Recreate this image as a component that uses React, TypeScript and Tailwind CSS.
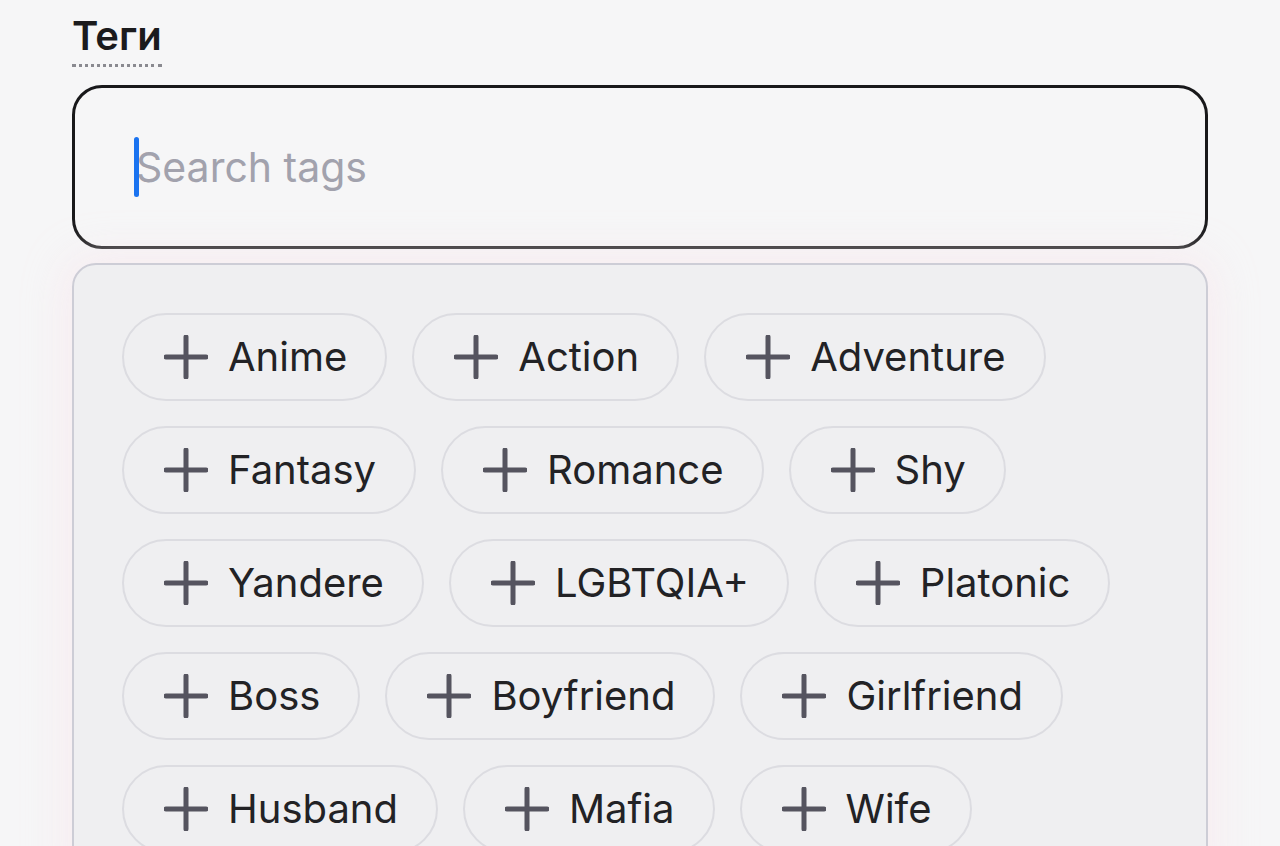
import React from "react";

const rows = [
  ["Anime", "Action", "Adventure"],
  ["Fantasy", "Romance", "Shy"],
  ["Yandere", "LGBTQIA+", "Platonic"],
  ["Boss", "Boyfriend", "Girlfriend"],
  ["Husband", "Mafia", "Wife"],
];

function PlusIcon() {
  return (
    <svg width="44" height="44" viewBox="0 0 44 44" className="shrink-0">
      <line x1="22" y1="2" x2="22" y2="42" stroke="#55545f" strokeWidth="5" strokeLinecap="round" />
      <line x1="2" y1="22" x2="42" y2="22" stroke="#55545f" strokeWidth="5" strokeLinecap="round" />
    </svg>
  );
}

function Chip({ label }: { label: string }) {
  return (
    <div className="flex h-[88px] items-center gap-[20px] rounded-full border-2 border-[#dcdce1] pl-[40px] pr-[38px]">
      <PlusIcon />
      <span className="text-[40px] leading-none text-[#222225]">{label}</span>
    </div>
  );
}

export default function App() {
  return (
    <div className="h-[846px] w-[1280px] overflow-hidden bg-[#f6f6f7] font-['Inter',sans-serif]">
      <div className="px-[72px] pt-[16px]">
        {/* label */}
        <div className="h-[69px]">
          <span className="inline-block border-b-[3px] border-dotted border-[#8a8a90] pb-[8px] text-[40px] font-semibold leading-none text-[#1b1b1d]">
            Теги
          </span>
        </div>

        {/* search */}
        <div className="flex h-[164px] items-center rounded-[30px] border-[3px] border-[#18181a] bg-[#f6f6f7] pl-[61px]">
          <div className="relative">
            <span className="absolute left-[-2px] top-[-10px] h-[60px] w-[5px] rounded-full bg-[#1a73f0]" />
            <span className="text-[41px] leading-none text-[#a2a2ad]">Search tags</span>
          </div>
        </div>

        {/* tags panel */}
        <div className="mt-[14px] rounded-[24px] border-2 border-[#cdcdd6] bg-[#efeff1] px-[48px] pt-[48px] pb-[40px] shadow-[0_0_40px_8px_rgba(248,232,238,0.7)]">
          <div className="flex flex-col gap-[25px]">
            {rows.map((row, i) => (
              <div key={i} className="flex gap-[25px]">
                {row.map((t) => (
                  <Chip key={t} label={t} />
                ))}
              </div>
            ))}
          </div>
        </div>
      </div>
    </div>
  );
}
